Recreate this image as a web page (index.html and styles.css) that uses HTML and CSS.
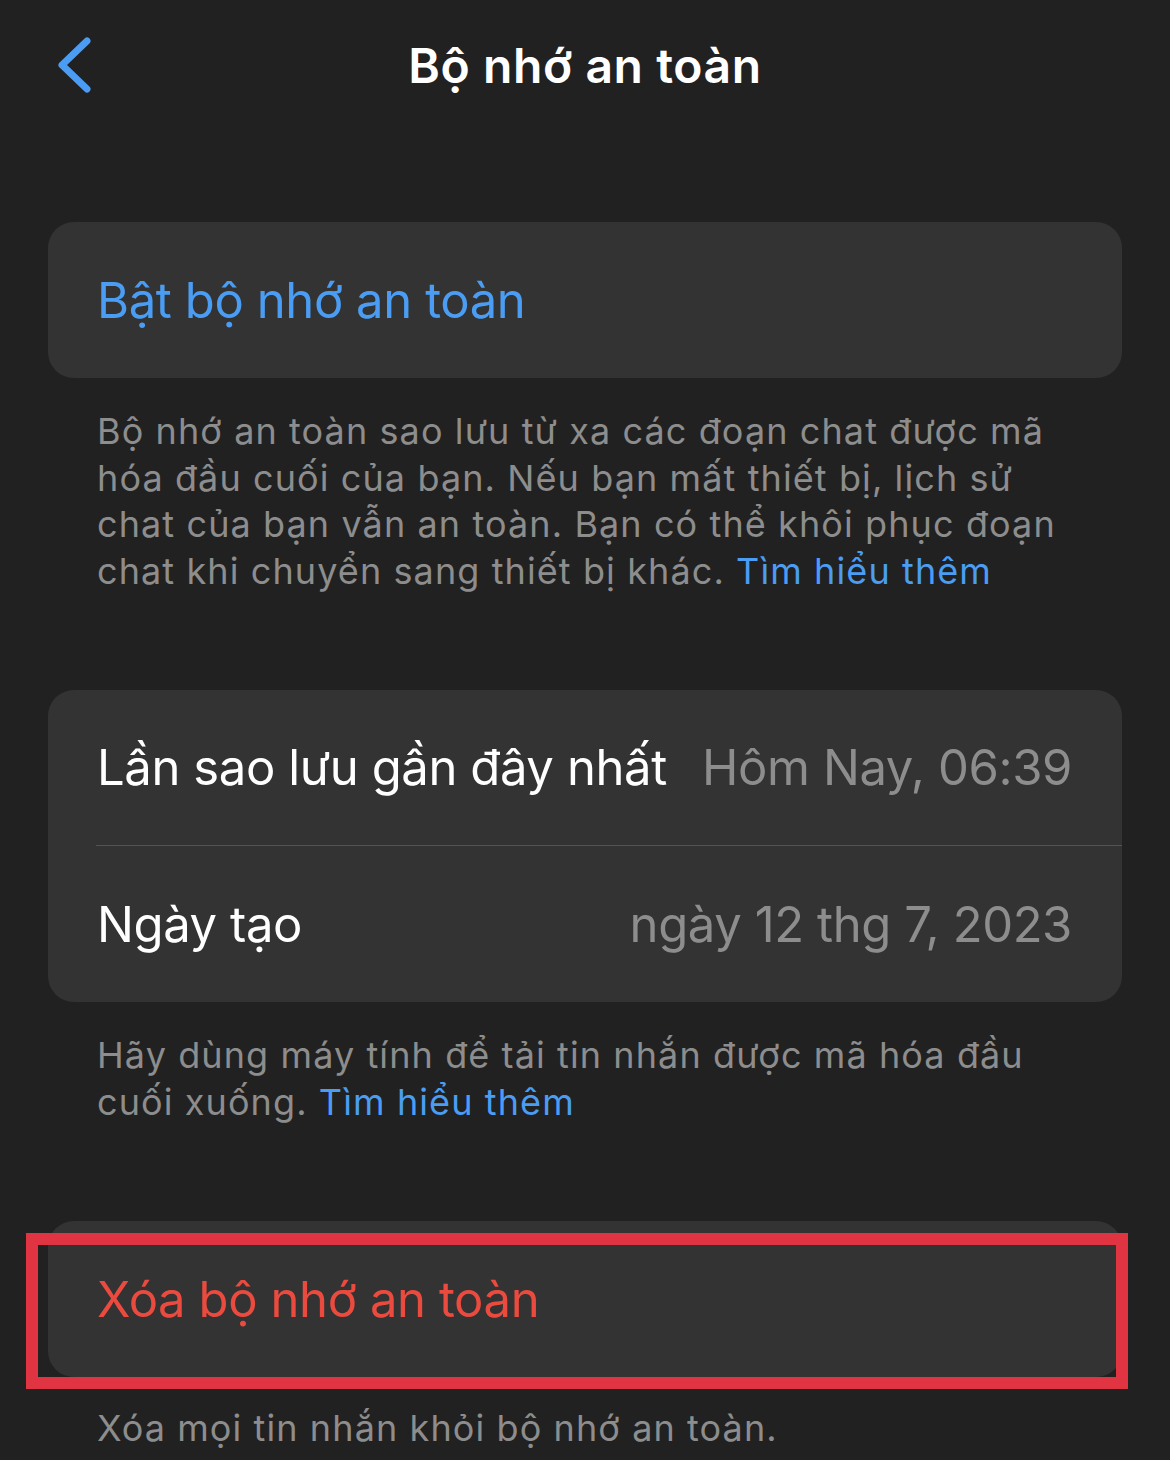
FILE: index.html
```html
<!DOCTYPE html>
<html lang="vi">
<head>
<meta charset="utf-8">
<title>Bộ nhớ an toàn</title>
<link rel="stylesheet" href="styles.css">
</head>
<body>
<header class="nav">
  <div class="nav-left">
    <svg class="back" width="40" height="64" viewBox="0 0 40 64" aria-hidden="true">
      <path d="M32 8 L7 32 L32 56" fill="none" stroke="#4a9df2" stroke-width="7" stroke-linecap="round" stroke-linejoin="round"/>
    </svg>
  </div>
  <h1 class="nav-title">Bộ nhớ an toàn</h1>
  <div class="nav-right"></div>
</header>

<main class="content">
  <section class="group group-first">
    <div class="card">
      <div class="row"><span class="action action-blue">Bật bộ nhớ an toàn</span></div>
    </div>
    <p class="footnote">Bộ nhớ an toàn sao lưu từ xa các đoạn chat được mã<br>hóa đầu cuối của bạn. Nếu bạn mất thiết bị, lịch sử<br>chat của bạn vẫn an toàn. Bạn có thể khôi phục đoạn<br>chat khi chuyển sang thiết bị khác. <a class="link">Tìm hiểu thêm</a></p>
  </section>

  <section class="group">
    <div class="card">
      <div class="row row-split row-top">
        <span class="label">Lần sao lưu gần đây nhất</span>
        <span class="value">Hôm Nay, 06:39</span>
      </div>
      <div class="divider"></div>
      <div class="row row-split">
        <span class="label">Ngày tạo</span>
        <span class="value">ngày 12 thg 7, 2023</span>
      </div>
    </div>
    <p class="footnote">Hãy dùng máy tính để tải tin nhắn được mã hóa đầu<br>cuối xuống. <a class="link">Tìm hiểu thêm</a></p>
  </section>

  <section class="group">
    <div class="card card-marked">
      <div class="row"><span class="action action-red">Xóa bộ nhớ an toàn</span></div>
      <div class="highlight"></div>
    </div>
    <p class="footnote footnote-last">Xóa mọi tin nhắn khỏi bộ nhớ an toàn.</p>
  </section>
</main>
</body>
</html>
```

FILE: styles.css
```css
html, body {
  margin: 0;
  padding: 0;
}

body {
  background: #212121;
  color: #ffffff;
  font-family: Inter, "Noto Sans", "DejaVu Sans", sans-serif;
  width: 1170px;
  height: 1460px;
  overflow: hidden;
}

/* navigation bar */
.nav {
  height: 130px;
  display: grid;
  grid-template-columns: 1fr auto 1fr;
  align-items: center;
}

.nav-left {
  display: flex;
  align-items: center;
  padding-left: 55px;
}

.back {
  display: block;
}

.nav-title {
  margin: 0;
  font-size: 48px;
  font-weight: 600;
  letter-spacing: 0.6px;
  color: #ffffff;
}

/* grouped list */
.content {
  padding: 0 48px;
}

.group {
  margin-top: 96px;
}

.group-first {
  margin-top: 92px;
}

.card {
  background: #333333;
  border-radius: 26px;
}

.card-marked {
  position: relative;
}

.row {
  height: 156px;
  display: flex;
  align-items: center;
  padding: 0 50px 0 49px;
}

.row-split {
  justify-content: space-between;
}

.row-top {
  height: 155px;
}

.divider {
  height: 1px;
  background: #535353;
  margin-left: 48px;
}

.action,
.label,
.value {
  font-size: 49px;
  letter-spacing: -0.4px;
}

.action-blue {
  color: #4a9df2;
}

.action-red {
  color: #eb4b3f;
}

.label {
  color: #ffffff;
}

.value {
  color: #8d8d8d;
}

.footnote {
  margin: 30px 0 0;
  padding: 0 49px;
  font-size: 36px;
  line-height: 46.5px;
  letter-spacing: 1.1px;
  color: #8d8d8d;
}

.footnote-last {
  margin-top: 28px;
}

.link {
  color: #4a9df2;
}

/* red marker drawn over the delete row */
.highlight {
  position: absolute;
  left: -22px;
  top: 12px;
  width: 1102px;
  height: 156px;
  box-sizing: border-box;
  border: 12px solid #e03443;
}
```
